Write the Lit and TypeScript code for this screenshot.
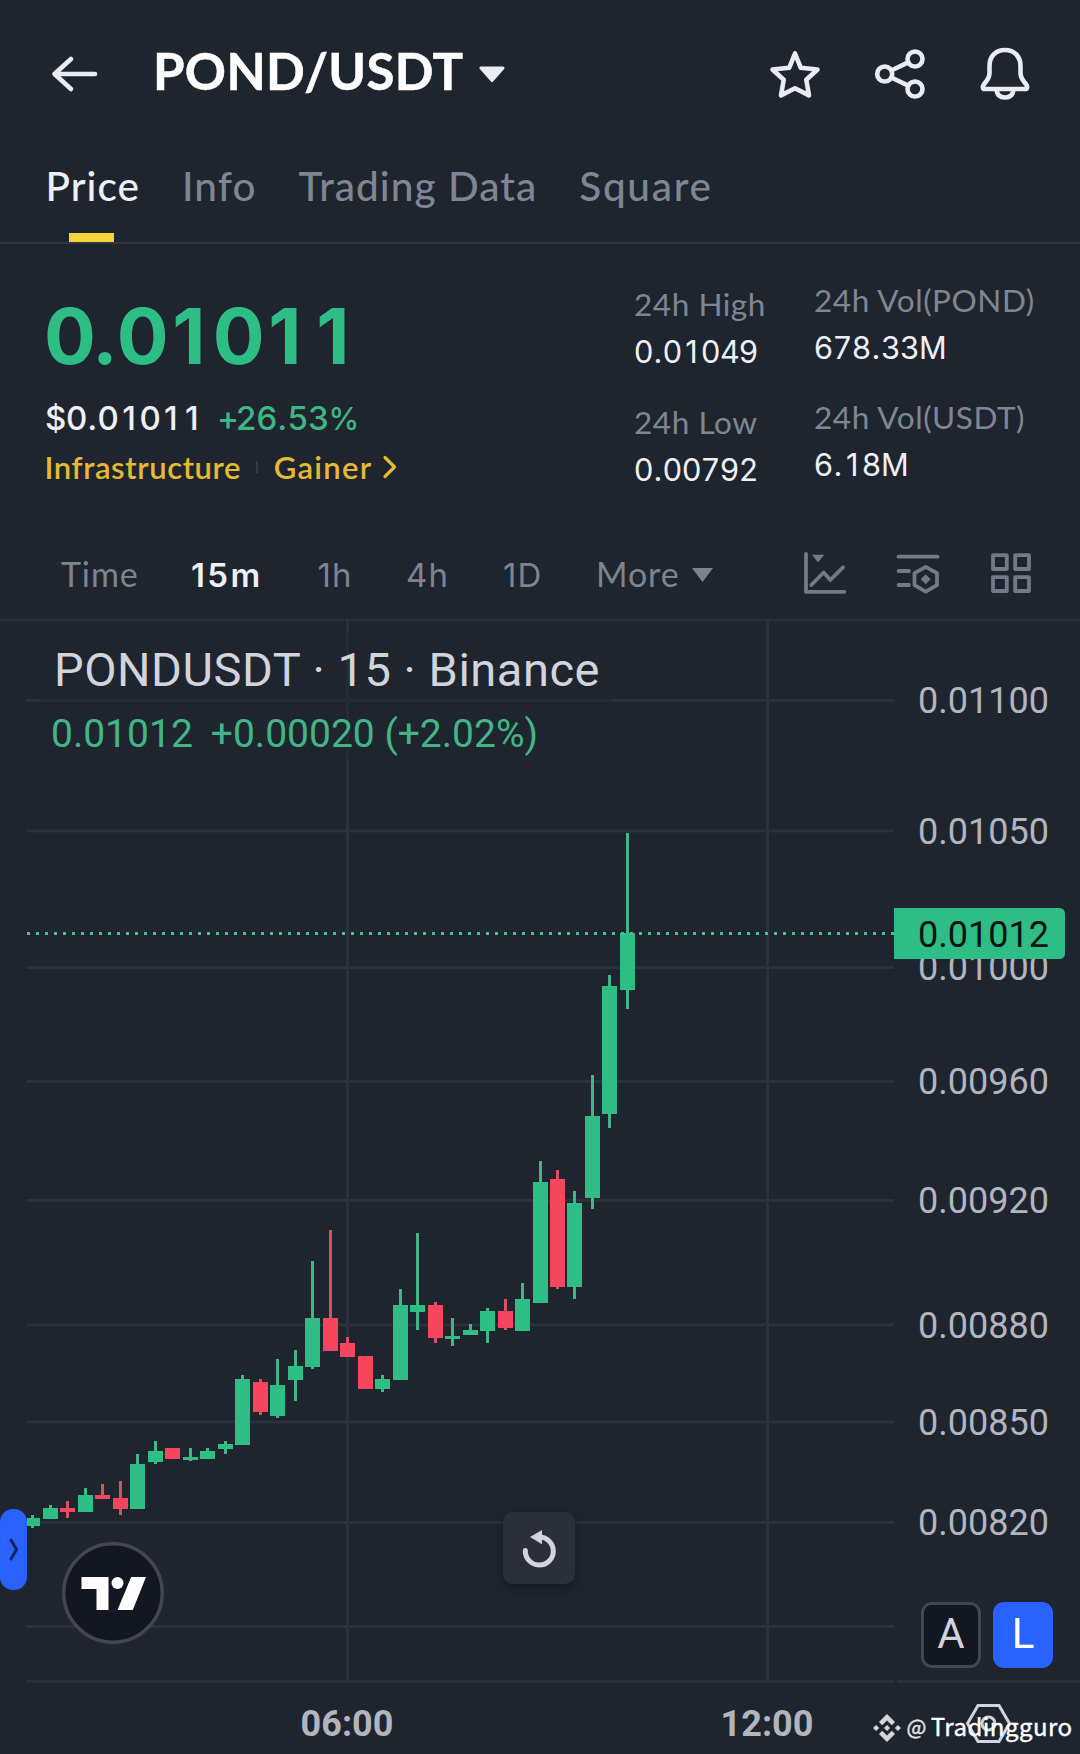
import { LitElement, html, svg, css } from "lit";
import { customElement, property } from "lit/decorators.js";
import { classMap } from "lit/directives/class-map.js";

interface Candle {
  x: number;
  up: boolean;
  top: number;
  bottom: number;
  high: number;
  low: number;
}

const c = (x: number, dir: string, top: number, bottom: number, high = top, low = bottom): Candle => ({
  x, up: dir === "u", top, bottom, high, low,
});

const CANDLES: Candle[] = [
  c(32.5, "u", 1518, 1526, 1515, 1528),
  c(50.5, "u", 1508, 1519, 1505),
  c(67.5, "d", 1508, 1512, 1501, 1518),
  c(85.5, "u", 1495, 1512, 1488),
  c(102.5, "d", 1495, 1499, 1484),
  c(120.5, "d", 1498, 1509, 1481, 1515),
  c(137.5, "u", 1464, 1509, 1454),
  c(155.5, "u", 1451, 1462, 1441, 1464),
  c(172.5, "d", 1448, 1459),
  c(190.5, "u", 1457, 1460, 1448, 1461),
  c(207.5, "u", 1451, 1459, 1448),
  c(225.5, "u", 1444, 1449, 1441, 1454),
  c(242.5, "u", 1379, 1445, 1375),
  c(260.5, "d", 1382, 1412, 1379, 1415),
  c(277.5, "u", 1385, 1416, 1359, 1418),
  c(295.5, "u", 1366, 1380, 1350, 1401),
  c(312.5, "u", 1318, 1367, 1261, 1369),
  c(330.5, "d", 1318, 1351, 1230),
  c(347.5, "d", 1343, 1357, 1337),
  c(365.5, "d", 1356, 1389),
  c(382.5, "u", 1379, 1389, 1375, 1392),
  c(400.5, "u", 1305, 1380, 1289),
  c(417.5, "u", 1305, 1312, 1233, 1330),
  c(435.5, "d", 1305, 1338, 1302, 1343),
  c(452.5, "u", 1336, 1339, 1318, 1346),
  c(470.5, "u", 1330, 1335, 1324),
  c(487.5, "u", 1311, 1331, 1308, 1343),
  c(505.5, "d", 1311, 1328, 1299, 1330),
  c(522.5, "u", 1299, 1331, 1283),
  c(540.5, "u", 1182, 1303, 1161),
  c(557.5, "d", 1179, 1287, 1170, 1289),
  c(574.5, "u", 1203, 1287, 1191, 1299),
  c(592.5, "u", 1116, 1198, 1075, 1209),
  c(609.5, "u", 986, 1114, 975, 1128),
  c(627.5, "u", 933, 990, 833, 1009),
];

const LEVELS: { y: number; label?: string }[] = [
  { y: 700.5, label: "0.01100" },
  { y: 831, label: "0.01050" },
  { y: 967.5, label: "0.01000" },
  { y: 1081.5, label: "0.00960" },
  { y: 1200.5, label: "0.00920" },
  { y: 1325, label: "0.00880" },
  { y: 1422, label: "0.00850" },
  { y: 1522.5, label: "0.00820" },
  { y: 1626.5 },
];

const HOURS = [
  { x: 347.5, label: "06:00" },
  { x: 767.5, label: "12:00" },
];

const TABS = ["Price", "Info", "Trading Data", "Square"];
const INTERVALS = ["Time", "15m", "1h", "4h", "1D"];

/* Figures are set in equal cells so that prices keep their width as digits change. */
const figures = (text: string) =>
  [...text].map((ch) => html`<span class=${/[\d$]/.test(ch) ? "fig" : ch === "." ? "dot" : ch === "+" ? "sign" : "unit"}>${ch}</span>`);

const figureStyles = css`
  .fig, .dot, .sign { display: inline-block; text-align: center; }
  .fig { width: 0.62em; }
  .dot { width: 0.32em; }
  .sign { width: 0.58em; }
`;

@customElement("pair-header")
class PairHeader extends LitElement {
  static styles = css`
    :host { display: flex; align-items: center; height: 148px; padding: 0 45px 0 49px; color: #eaecf4; }
    svg { display: block; fill: none; stroke: currentColor; stroke-width: 4.6; stroke-linecap: round; stroke-linejoin: round; }
    .title { margin: -6px 16px 0 52px; font: 700 51px/60px Lato, sans-serif; letter-spacing: 0.3px; color: #fff; -webkit-text-stroke: 0.5px #fff; }
    .caret { fill: currentColor; stroke-width: 3; }
    .actions { display: flex; gap: 45px; margin-left: auto; }
  `;
  render() {
    return html`
      <svg width="52" height="40" viewBox="0 0 52 40"><path d="M5.5 20H46M22 5 5.5 20 22 35" /></svg>
      <div class="title">POND/USDT</div>
      <svg class="caret" width="26" height="17" viewBox="0 0 26 17"><path d="M2 2H24L13 14.6Z" /></svg>
      <div class="actions">
        <svg width="60" height="60" viewBox="0 0 60 60">
          <path d="M30 9.5 35.8 23.8 52.5 25.5 41.3 35.8 44 51.4 30 44.2 16 51.4 18.7 35.8 7.5 25.5 24.2 23.8Z" />
        </svg>
        <svg width="60" height="60" viewBox="0 0 60 60">
          <circle cx="14.7" cy="30" r="7.5" /><circle cx="45" cy="15" r="7.5" /><circle cx="45" cy="45" r="7.5" />
          <path d="M21.8 26.3 38.2 18.4M21.8 33.7 38.2 41.6" />
        </svg>
        <svg width="60" height="60" viewBox="0 0 60 60">
          <path d="M30 6C20 6 14.5 13 14.5 22V29C14.5 34 12 36.5 9.5 39.5 7.3 42.2 7.3 45 10 45H50C52.7 45 52.7 42.2 50.5 39.5 48 36.5 45.5 34 45.5 29V22C45.5 13 40 6 30 6Z" />
          <path d="M21.6 46C22 51 25 53.5 30 53.5S38 51 38.4 46" />
        </svg>
      </div>`;
  }
}

@customElement("nav-tabs")
class NavTabs extends LitElement {
  static styles = css`
    :host { display: flex; gap: 42px; height: 94px; padding-left: 45.5px; border-bottom: 2px solid #2f3741; }
    .tab { display: flex; flex-direction: column; justify-content: space-between; align-items: center;
      font: 500 40.5px/75px Lato, sans-serif; letter-spacing: 1.05px; color: #7f8693; white-space: nowrap; }
    .tab:last-child { letter-spacing: 1.7px; }
    .active { color: #eef0f7; }
    .active::after { content: ""; width: 45px; height: 9px; margin-right: 3px; background: #f8d33a; }
  `;
  render() {
    return TABS.map((t, i) => html`<div class=${classMap({ tab: true, active: i === 0 })}>${t}</div>`);
  }
}

@customElement("stat-item")
class StatItem extends LitElement {
  @property() label = "";
  @property() value = "";
  static styles = [
    figureStyles,
    css`
      :host { display: block; white-space: nowrap; }
      .label { font: 400 31.5px/47px Lato, sans-serif; letter-spacing: 0.55px; color: #7f8693; }
      .value { font: 400 30.7px/47px Inter, sans-serif; color: #eef0f7; }
    `,
  ];
  render() {
    return html`<div class="label">${this.label}</div><div class="value">${figures(this.value)}</div>`;
  }
}

@customElement("price-summary")
class PriceSummary extends LitElement {
  static styles = [
    figureStyles,
    css`
      :host { display: grid; grid-template-columns: 590px 180px 1fr; height: 286px; box-sizing: border-box; padding-left: 44px; white-space: nowrap; }
      .quote { padding-top: 47px; }
      .last { font: 700 77px/90px Inter, sans-serif; color: #2ebd85; }
      .last .fig { width: 0.624em; }
      .sub { display: flex; gap: 14.5px; margin-top: 15px; font: 500 33px/44px Inter, sans-serif; }
      .sub .fig { width: 0.636em; }
      .usd { padding-left: 1px; color: #eef0f7; }
      .change { color: #3db685; }
      .change .fig { width: 0.62em; }
      .change .unit { font-size: 31px; }
      .tags { display: flex; align-items: center; margin-top: 4px; padding-left: 0.5px; font: 600 31px/44px Lato, sans-serif; letter-spacing: 0.6px; color: #e5b932; }
      .sep { width: 2px; height: 12px; margin: 0 16px 0 14.5px; background: #343c47; }
      .tag:nth-of-type(3) { letter-spacing: 1.3px; }
      .more { display: block; margin-left: 9.5px; fill: none; stroke: currentColor; stroke-width: 3.2; stroke-linecap: round; stroke-linejoin: round; }
      .col { display: flex; flex-direction: column; gap: 24px; padding-top: 37px; }
      .col.volume { gap: 23px; padding-top: 33px; }
    `,
  ];
  render() {
    return html`
      <div class="quote">
        <div class="last">${figures("0.01011")}</div>
        <div class="sub"><span class="usd">${figures("$0.01011")}</span><span class="change">${figures("+26.53%")}</span></div>
        <div class="tags">
          <span class="tag">Infrastructure</span><span class="sep"></span><span class="tag">Gainer</span>
          <svg class="more" width="16" height="24" viewBox="0 0 16 24"><path d="M3 2.5 12.5 12 3 21.5" /></svg>
        </div>
      </div>
      <div class="col">
        <stat-item label="24h High" value="0.01049"></stat-item>
        <stat-item label="24h Low" value="0.00792"></stat-item>
      </div>
      <div class="col volume">
        <stat-item label="24h Vol(POND)" value="678.33M"></stat-item>
        <stat-item label="24h Vol(USDT)" value="6.18M"></stat-item>
      </div>`;
  }
}

@customElement("interval-bar")
class IntervalBar extends LitElement {
  static styles = css`
    :host { display: flex; align-items: center; justify-content: space-between; height: 89px; padding: 0 45px 0 61px; color: #7d8491; }
    .list { display: grid; grid-template-columns: 130px 126.5px 88.5px 97px 93px auto; align-items: baseline; margin-top: -1px;
      font: 400 33px/40px Inter, sans-serif; letter-spacing: 1.2px; white-space: nowrap; }
    .word { font-family: Lato, sans-serif; font-size: 34px; letter-spacing: 0.9px; }
    .active { font-weight: 600; letter-spacing: 2.4px; color: #eef0f7; }
    .caret { margin-left: 12px; vertical-align: 5px; fill: currentColor; }
    .tools { display: flex; gap: 45px; margin-top: -3px; color: #727987; }
    .tools svg { display: block; fill: none; stroke: currentColor; stroke-width: 3.8; stroke-linecap: round; stroke-linejoin: round; }
    .tools .solid { fill: currentColor; stroke: none; }
  `;
  render() {
    return html`
      <div class="list">
        ${INTERVALS.map((t, i) => html`<span class=${classMap({ word: i === 0, active: i === 1 })}>${t}</span>`)}
        <span class="word">More<svg class="caret" width="21" height="14" viewBox="0 0 21 14"><path d="M0 0H21L10.5 14Z" /></svg></span>
      </div>
      <div class="tools">
        <svg width="48" height="48" viewBox="0 0 48 48">
          <path d="M5 5V42.8H43.3M10.3 36 22.7 23.5 29.3 31 42 18.3" /><path class="solid" d="M11 5.7H23.2L17.1 13.5Z" />
        </svg>
        <svg width="48" height="48" viewBox="0 0 48 48">
          <path d="M4.5 7.7H43.5M4.5 22H15M4.5 36H15M31.7 17.8 43 24.2V36.2L31.7 42.6 20.5 36.2V24.2Z" />
          <path class="solid" d="M31.7 25.3 36.7 30.3 31.7 35.3 26.7 30.3Z" />
        </svg>
        <svg width="48" height="48" viewBox="0 0 48 48">
          <path d="M6 6.2H19.8V20H6ZM28.2 6.2H42V20H28.2ZM6 28.2H19.8V42H6ZM28.2 28.2H42V42H28.2Z" />
        </svg>
      </div>`;
  }
}

@customElement("price-chart")
class PriceChart extends LitElement {
  static styles = css`
    :host { display: block; position: relative; height: 1135px; font-family: Roboto, sans-serif; }
    .plot { display: block; }
    .grid { stroke: #2a313b; stroke-width: 3; }
    .frame { stroke: #28303a; stroke-width: 3; }
    .up { fill: #2ebd85; }
    .down { fill: #f6465d; }
    .wick-up { fill: #42b587; }
    .wick-down { fill: #d9505f; }
    .last-line { stroke: #46c092; stroke-width: 3; stroke-dasharray: 3 6; }
    .axis { font-size: 36px; fill: #b2b5be; }
    .hour { font-weight: 700; text-anchor: middle; }
    .tag-text { fill: #0a1512; }
    .gear { fill: none; stroke: #d1d4dc; stroke-width: 3; }
    .legend { position: absolute; left: 40px; top: 13px; padding: 9.5px 13px 0 11px; background: rgba(31, 37, 47, 0.5); white-space: nowrap; height: 128px; box-sizing: border-box; }
    .symbol { padding-left: 3px; font-size: 47px; line-height: 56px; letter-spacing: 0.53px; color: #d1d4dc; }
    .values { display: flex; gap: 18px; margin-top: 10px; font-size: 39px; line-height: 52px; color: #42b587; }
    .drawer { position: absolute; left: 0; top: 890px; width: 27px; height: 81px; border-radius: 13px; background: #2962ff; }
    .reset { position: absolute; left: 503px; top: 893px; width: 72px; height: 72px; border-radius: 10px; background: #2a2f39; box-shadow: 0 4px 8px rgba(8, 12, 20, 0.45); }
    .badge { position: absolute; left: 62px; top: 923px; }
    .modes { position: absolute; left: 921px; top: 983px; display: flex; gap: 12px; }
    .mode { width: 60px; height: 66px; box-sizing: border-box; border: 3px solid #434651; border-radius: 11px; background: #131722;
      color: #d1d4dc; font-size: 42px; line-height: 58px; text-align: center; }
    .mode.on { border-color: #2962ff; background: #2962ff; color: #fff; }
    svg { display: block; }
  `;
  private candle(k: Candle) {
    return svg`
      <rect class=${k.up ? "wick-up" : "wick-down"} x=${k.x - 1.5} y=${k.high} width="3" height=${k.low - k.high} />
      <rect class=${k.up ? "up" : "down"} x=${k.x - 7.5} y=${k.top} width="15" height=${k.bottom - k.top} />`;
  }
  render() {
    return html`
      <svg class="plot" width="1080" height="1135" viewBox="0 619 1080 1135">
        <clipPath id="pane"><rect x="27" y="619" width="867" height="1062" /></clipPath>
        <path class="frame" d="M0 619.8H1080M27 1681.5H894M897 1681.5H1080" />
        ${LEVELS.map((l) => svg`<line class="grid" x1="27" x2="894" y1=${l.y} y2=${l.y} />`)}
        ${HOURS.map((h) => svg`<line class="grid" x1=${h.x} x2=${h.x} y1="619" y2="1680" />`)}
        <g clip-path="url(#pane)">${CANDLES.map((k) => this.candle(k))}</g>
        <line class="last-line" x1="27" x2="894" y1="933.5" y2="933.5" />
        ${LEVELS.map((l) => (l.label ? svg`<text class="axis" x="918" y=${l.y + 12.5}>${l.label}</text>` : null))}
        <path class="up" d="M894 908H1059Q1065 908 1065 914V953Q1065 959 1059 959H894Z" />
        <text class="axis tag-text" x="918" y="946.5">0.01012</text>
        ${HOURS.map((h) => svg`<text class="axis hour" x=${h.x - 0.5} y="1736">${h.label}</text>`)}
        <path class="gear" d="M978 1705.5H999L1009.5 1723.5 999 1741.5H978L967.5 1723.5Z" />
        <circle class="gear" cx="988.5" cy="1723.5" r="6.5" />
      </svg>
      <div class="legend">
        <div class="symbol">PONDUSDT · 15 · Binance</div>
        <div class="values"><span>0.01012</span><span>+0.00020 (+2.02%)</span></div>
      </div>
      <div class="drawer">
        <svg width="27" height="81" viewBox="0 0 27 81"><path d="M11 31 16.5 40.5 11 50" fill="none" stroke="#13235a" stroke-width="3" stroke-linecap="round" /></svg>
      </div>
      <div class="badge">
        <svg width="102" height="102" viewBox="0 0 102 102">
          <circle cx="51" cy="51" r="49.2" fill="#131722" stroke="#434651" stroke-width="3.5" />
          <path fill="#fff" d="M19.5 35H46.5V68H34.5V47H19.5ZM69.2 35H84L70.8 68H55.5Z" /><circle cx="55.5" cy="41" r="6" fill="#fff" />
        </svg>
      </div>
      <div class="reset">
        <svg width="72" height="72" viewBox="0 0 72 72">
          <path d="M22.3 38.5A14 14 0 1 0 36.3 25" fill="none" stroke="#d1d4dc" stroke-width="5" stroke-linecap="round" />
          <path d="M27 25 39 18V32.3Z" fill="#d1d4dc" />
        </svg>
      </div>
      <div class="modes"><div class="mode">A</div><div class="mode on">L</div></div>`;
  }
}

@customElement("author-mark")
class AuthorMark extends LitElement {
  static styles = css`
    :host { position: absolute; right: 7.5px; bottom: 8px; display: flex; align-items: center; height: 36px; color: #fff;
      font: 400 24px/36px "Noto Sans CJK SC", "Noto Sans", sans-serif; letter-spacing: 0.46px; }
    svg { display: block; margin: 0 5px 0 0; fill: #d4d6da; }
    .at { font-size: 21px; margin-right: 4px; color: #e2e4e8; }
    .at, .name { margin-top: -4px; -webkit-text-stroke: 0.4px currentColor; }
  `;
  render() {
    return html`
      <svg width="28" height="28" viewBox="0 0 28 28">
        <path d="M14 0 22 8 18.8 11.2 14 6.4 9.2 11.2 6 8ZM14 28 6 20 9.2 16.8 14 21.6 18.8 16.8 22 20ZM3.1 10.9 6.2 14 3.1 17.1 0 14ZM24.9 10.9 28 14 24.9 17.1 21.8 14ZM14 10.9 17.1 14 14 17.1 10.9 14Z" />
      </svg>
      <span class="at">@</span><span class="name">Tradingguro</span>`;
  }
}

@customElement("app-root")
class AppRoot extends LitElement {
  static styles = css`
    :host { display: block; position: relative; width: 1080px; height: 1754px; overflow: hidden; background: #1f252f; }
  `;
  render() {
    return html`
      <pair-header></pair-header>
      <nav-tabs></nav-tabs>
      <price-summary></price-summary>
      <interval-bar></interval-bar>
      <price-chart></price-chart>
      <author-mark></author-mark>`;
  }
}
